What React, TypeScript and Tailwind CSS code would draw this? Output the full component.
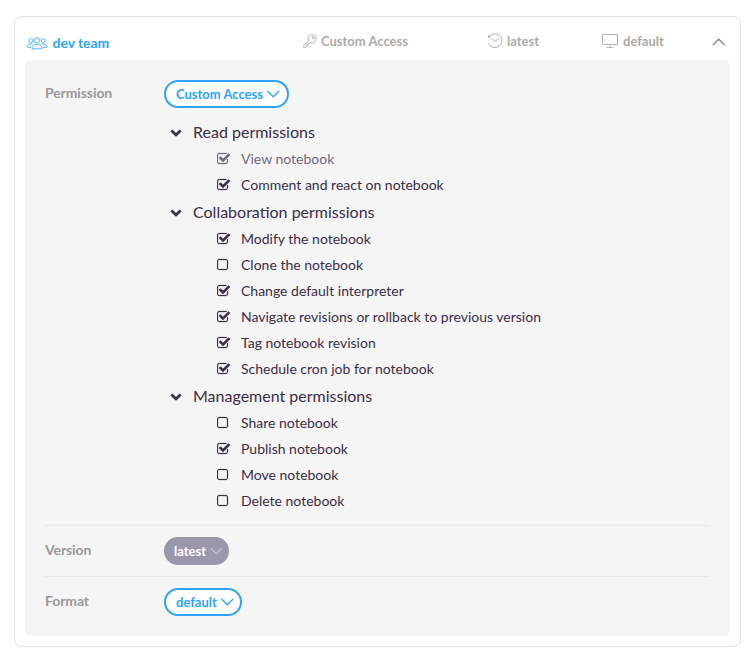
import React from 'react';

type Item = { label: string; checked: boolean; disabled?: boolean };
type Group = { title: string; items: Item[] };

const groups: Group[] = [
  {
    title: 'Read permissions',
    items: [
      { label: 'View notebook', checked: true, disabled: true },
      { label: 'Comment and react on notebook', checked: true },
    ],
  },
  {
    title: 'Collaboration permissions',
    items: [
      { label: 'Modify the notebook', checked: true },
      { label: 'Clone the notebook', checked: false },
      { label: 'Change default interpreter', checked: true },
      { label: 'Navigate revisions or rollback to previous version', checked: true },
      { label: 'Tag notebook revision', checked: true },
      { label: 'Schedule cron job for notebook', checked: true },
    ],
  },
  {
    title: 'Management permissions',
    items: [
      { label: 'Share notebook', checked: false },
      { label: 'Publish notebook', checked: true },
      { label: 'Move notebook', checked: false },
      { label: 'Delete notebook', checked: false },
    ],
  },
];

function CheckIcon({ checked }: { checked: boolean }) {
  return checked ? (
    <svg className="size-[14px] shrink-0" viewBox="64 0 1792 1792" fill="currentColor" stroke="currentColor" strokeWidth="30">
      <path d="M1472 930v318q0 119-84.500 203.500t-203.500 84.500h-832q-119 0-203.500-84.500t-84.500-203.500v-832q0-119 84.500-203.500t203.500-84.500h832q63 0 117 25 15 7 18 23 3 17-9 29l-49 49q-10 10-23 10-3 0-9-2-23-6-45-6h-832q-66 0-113 47t-47 113v832q0 66 47 113t113 47h832q66 0 113-47t47-113v-254q0-13 9-22l64-64q10-10 23-10 6 0 12 3 20 8 20 29zm231-489l-814 814q-24 24-57 24t-57-24l-430-430q-24-24-24-57t24-57l110-110q24-24 57-24t57 24l263 263 647-647q24-24 57-24t57 24l110 110q24 24 24 57t-24 57z" />
    </svg>
  ) : (
    <svg className="size-[14px] shrink-0" viewBox="192 0 1792 1792" fill="currentColor" stroke="currentColor" strokeWidth="30">
      <path d="M1312 256h-832q-66 0-113 47t-47 113v832q0 66 47 113t113 47h832q66 0 113-47t47-113v-832q0-66-47-113t-113-47zm288 160v832q0 119-84.500 203.500t-203.500 84.500h-832q-119 0-203.500-84.500t-84.500-203.500v-832q0-119 84.500-203.500t203.500-84.500h832q119 0 203.500 84.500t84.500 203.500z" />
    </svg>
  );
}

function GroupChevron() {
  return (
    <svg className="mt-[2px] h-[8px] w-[12px] shrink-0" viewBox="0 0 12 8" fill="none" stroke="currentColor" strokeWidth="2.700">
      <path d="M1.300 1.400 6 5.800l4.700-4.400" />
    </svg>
  );
}

function ThinChevron({ className }: { className: string }) {
  return (
    <svg className={`h-[8px] w-[13px] shrink-0 ${className}`} viewBox="0 0 13 8" fill="none" stroke="currentColor" strokeWidth="1.300">
      <path d="M.5 1 6.300 6.800 12.100 1" />
    </svg>
  );
}

function UsersIcon() {
  return (
    <svg className="h-[13px] w-[20px] shrink-0" viewBox="0 0 20 13" fill="none" stroke="currentColor" strokeWidth="0.800">
      <circle cx="10" cy="3.400" r="2.700" />
      <circle cx="3.800" cy="3.600" r="2" />
      <circle cx="16.200" cy="3.600" r="2" />
      <path d="M5 11.900V10.700C5 8.900 6.400 7.900 8.400 7.500q1.600.7 3.200 0c2 .4 3.400 1.400 3.400 3.200v1.200z" />
      <path d="M4 10.300H.6V9.200c0-1.300.9-2 2.300-2.300q.9.400 1.800 0l1 .3M16 10.300h3.400V9.200c0-1.300-.9-2-2.300-2.300q-.9.400-1.800 0l-1 .3" />
    </svg>
  );
}

function KeyIcon() {
  return (
    <svg className="size-[14px] shrink-0" viewBox="0 0 14 14" fill="none" stroke="currentColor" strokeWidth="0.900" strokeLinejoin="round">
      <path d="M5.500 6.600A4.100 4.100 0 1 1 7.400 8.500L6.300 9.600H5v1.300H3.700v1.300L2.700 13.300H.7V11.400z" />
      <circle cx="10.200" cy="3.800" r="1.100" />
    </svg>
  );
}

function HistoryIcon() {
  return (
    <svg className="size-[16px] shrink-0" viewBox="0 0 16 16" fill="none" stroke="currentColor" strokeWidth="0.900">
      <path d="M1.800 4.200A7 7 0 1 1 1.500 10.500" />
      <path d="M4.200 5.300 7.800 8.200 12.200 5.600" />
      <path d="M.9 1.900 1.200 5 4.200 4.100z" fill="currentColor" stroke="none" />
    </svg>
  );
}

function MonitorIcon() {
  return (
    <svg className="h-[14px] w-[16px] shrink-0" viewBox="0 0 16 14" fill="none" stroke="currentColor" strokeWidth="0.900">
      <path d="M.5.5h15v10H.5zM8 10.500v3M4.500 13.500h7" />
    </svg>
  );
}

const pill = 'flex h-7 items-center rounded-full text-[13px] font-bold';
const fieldLabel = 'w-[120px] pl-[1px] text-[14px] leading-[18px] font-bold tracking-[-0.1px] text-[#999]';

export default function App() {
  return (
    <div className="h-[663px] w-[754px] bg-white pt-4 pl-[14px] font-['Lato',sans-serif]">
      <div className="h-[631px] w-[727px] rounded-lg border border-[#e0e0e0] px-[10px]">
        <header className="flex h-[43px] items-center text-[13px] font-bold text-[#aaa]">
          <div className="flex w-[278px] items-center gap-[5px] pt-[9px] pl-[2px] text-[#2ea3f9]">
            <UsersIcon />
            <span className="-mt-px pl-[0.5px] text-[14px] leading-4 tracking-[-0.05px]">dev team</span>
          </div>
          <div className="flex w-[184px] items-center gap-1 pt-[5px]">
            <KeyIcon />
            <span className="leading-4">Custom Access</span>
          </div>
          <div className="flex w-[115px] items-center gap-1 pt-[5px]">
            <HistoryIcon />
            <span className="leading-4">latest</span>
          </div>
          <div className="flex w-[110px] items-center gap-[5px] pt-[5px]">
            <MonitorIcon />
            <span className="leading-4">default</span>
          </div>
          <ThinChevron className="mt-[7px] rotate-180 text-[#888]" />
        </header>

        <main className="h-[576px] w-[705px] rounded-md bg-[#f5f5f5] pt-5 pr-5 pl-[19px]">
          <section className="flex h-[446px] border-b border-[#e8e8e8]">
            <div className={`${fieldLabel} pt-[4px]`}>Permission</div>
            <div>
              <button className={`${pill} w-[125px] gap-[4px] border-2 border-[#2ea3f9] bg-white pl-[10px] text-[#2ea3f9]`}>
                <span className="leading-4">Custom Access</span>
                <ThinChevron className="" />
              </button>
              <div className="pt-[10px] text-[#3b2e46]">
                {groups.map((g) => (
                  <div key={g.title}>
                    <div className="flex h-7 items-center gap-[11px] pl-[6px] text-[16px]">
                      <GroupChevron />
                      <span>{g.title}</span>
                    </div>
                    {g.items.map((it) => (
                      <div
                        key={it.label}
                        className={`flex h-[26px] items-center gap-[10px] pl-[53px] text-[14px] ${it.disabled ? 'opacity-70' : ''}`}
                      >
                        <CheckIcon checked={it.checked} />
                        <span className="leading-[18px]">{it.label}</span>
                      </div>
                    ))}
                  </div>
                ))}
              </div>
            </div>
          </section>
          <section className="flex h-[51px] items-center border-b border-[#e8e8e8]">
            <div className={`${fieldLabel} pb-[2px]`}>Version</div>
            <button className={`${pill} w-[65px] gap-[4px] bg-[#9a96ab] pl-[10px] text-white`}>
              <span className="leading-4">latest</span>
              <ThinChevron className="text-[#c4c1cd]" />
            </button>
          </section>
          <section className="flex h-[50px] items-center">
            <div className={`${fieldLabel} pb-[2px]`}>Format</div>
            <button className={`${pill} w-[78px] gap-[4px] border-2 border-[#2ea3f9] bg-white pl-[10px] text-[#2ea3f9]`}>
              <span className="leading-4">default</span>
              <ThinChevron className="" />
            </button>
          </section>
        </main>
      </div>
    </div>
  );
}
